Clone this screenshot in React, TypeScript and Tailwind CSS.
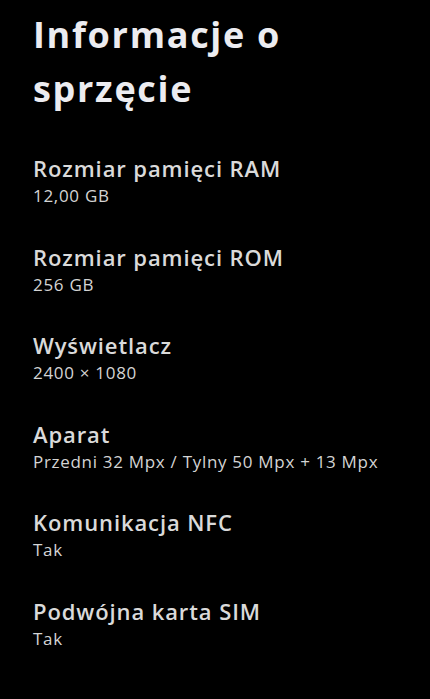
import React from "react";

const items = [
  { t: "Rozmiar pamięci RAM", v: "12,00 GB" },
  { t: "Rozmiar pamięci ROM", v: "256 GB" },
  { t: "Wyświetlacz", v: "2400 × 1080" },
  { t: "Aparat", v: "Przedni 32 Mpx / Tylny 50 Mpx + 13 Mpx" },
  { t: "Komunikacja NFC", v: "Tak" },
  { t: "Podwójna karta SIM", v: "Tak" },
];

export default function App() {
  return (
    <div
      className="w-[430px] h-[699px] bg-black overflow-hidden px-[33px]"
      style={{ fontFamily: '"Open Sans", "Noto Sans", sans-serif' }}
    >
      <h1 className="pt-[8px] text-[36px] leading-[54px] font-bold text-[#ececf0] tracking-[1.7px]">
        Informacje o
        <br />
        sprzęcie
      </h1>
      <div className="mt-[38px] flex flex-col">
        {items.map((it) => (
          <div key={it.t} className="h-[88.6px]">
            <div className="text-[22px] leading-[28px] font-semibold text-[#dadada] tracking-[0.9px]">{it.t}</div>
            <div className="mt-[3px] text-[17px] leading-[22px] text-[#d4d4d4] tracking-[0.7px]">{it.v}</div>
          </div>
        ))}
      </div>
    </div>
  );
}
